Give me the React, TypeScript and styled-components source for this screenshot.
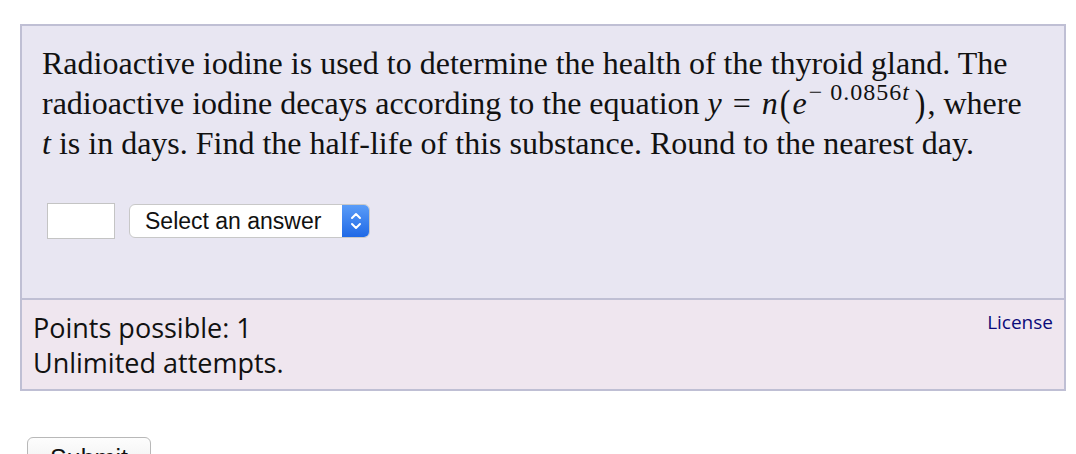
import styled, { createGlobalStyle } from "styled-components";

const GlobalStyle = createGlobalStyle`
    body {
        margin: 0;
        background: #ffffff;
        font-family: "Liberation Sans", Arial, sans-serif;
    }
`;

const Page = styled.div`
    padding: 24px 10px 0 20px;
    width: 1046px;
`;

const QuestionBox = styled.div`
    border: 2px solid #bfbfd4;
    background: #e8e6f2;
`;

const QuestionBody = styled.div`
    padding: 17px 34px 59px 20px;
`;

const Prompt = styled.p`
    margin: 0;
    font-family: "Liberation Serif", "Times New Roman", serif;
    font-size: 32px;
    line-height: 40px;
    color: #111;
`;

const MathVar = styled.span`
    font-style: italic;
`;

const Op = styled.span`
    margin: 0 11px;
`;

const Paren = styled.span`
    display: inline-block;
    transform: scaleY(1.2);
    margin: 0 2px;
`;

const Sup = styled.sup`
    font-size: 24px;
    letter-spacing: 1px;
    vertical-align: 14px;
    line-height: 0;
    margin-left: 2px;
    margin-right: 3px;
`;

const Minus = styled.span`
    margin-right: 7px;
`;

const AnswerRow = styled.div`
    display: flex;
    align-items: center;
    gap: 14px;
    margin-top: 40px;
    padding-left: 5px;
`;

const AnswerInput = styled.input`
    box-sizing: border-box;
    width: 68px;
    height: 36px;
    border: 1px solid #c4c4c4;
    background: #fff;
    outline: none;
`;

const SelectBox = styled.div`
    box-sizing: border-box;
    display: flex;
    align-items: stretch;
    width: 241px;
    height: 34px;
    border: 1px solid #c8c8c8;
    border-radius: 6px;
    background: #fff;
    overflow: hidden;
`;

const SelectLabel = styled.span`
    flex: 1;
    display: flex;
    align-items: center;
    padding-left: 15px;
    font-family: "Liberation Sans", Arial, sans-serif;
    font-size: 23px;
    color: #111;
`;

const SelectArrow = styled.span`
    width: 27px;
    display: flex;
    align-items: center;
    justify-content: center;
    background: linear-gradient(#5a9cf8, #1f69e6);
`;

const Footer = styled.div`
    display: flex;
    justify-content: space-between;
    border-top: 2px solid #bfbfd4;
    background: #efe6ef;
    padding: 10px 11px 9px 11px;
`;

const FooterInfo = styled.div`
    font-family: "Open Sans", sans-serif;
    font-size: 27px;
    line-height: 35px;
    color: #111;
`;

const LicenseLink = styled.a`
    font-family: "Open Sans", sans-serif;
    font-size: 19px;
    line-height: 24px;
    color: #0a0a7a;
    text-decoration: none;
`;

const SubmitButton = styled.button`
    margin: 46px 0 0 7px;
    width: 124px;
    height: 40px;
    border: 1px solid #b8b8b8;
    border-radius: 6px;
    background: linear-gradient(#fdfdfd, #ececec);
    font-family: "Liberation Sans", Arial, sans-serif;
    font-size: 25px;
    color: #111;
    padding: 0;
    line-height: 40px;
`;

const Chevrons = () => (
    <svg width="14" height="22" viewBox="0 0 14 22" fill="none">
        <path d="M3 8 L7 4 L11 8" stroke="#fff" strokeWidth="2" strokeLinecap="round" strokeLinejoin="round" />
        <path d="M3 14 L7 18 L11 14" stroke="#fff" strokeWidth="2" strokeLinecap="round" strokeLinejoin="round" />
    </svg>
);

const App = () => {
    return (
        <>
            <GlobalStyle />
            <Page>
                <QuestionBox>
                    <QuestionBody>
                        <Prompt>
                            Radioactive iodine is used to determine the health of the thyroid gland. The
                            radioactive iodine decays according to the equation <MathVar>y</MathVar>
                            <Op>=</Op>
                            <MathVar>n</MathVar>
                            <Paren>(</Paren>
                            <MathVar>e</MathVar>
                            <Sup>
                                <Minus>−</Minus>0.0856<MathVar>t</MathVar>
                            </Sup>
                            <Paren>)</Paren>, where <MathVar>t</MathVar> is in days. Find the half-life of this
                            substance. Round to the nearest day.
                        </Prompt>
                        <AnswerRow>
                            <AnswerInput type="text" />
                            <SelectBox>
                                <SelectLabel>Select an answer</SelectLabel>
                                <SelectArrow>
                                    <Chevrons />
                                </SelectArrow>
                            </SelectBox>
                        </AnswerRow>
                    </QuestionBody>
                    <Footer>
                        <FooterInfo>
                            Points possible: 1
                            <br />
                            Unlimited attempts.
                        </FooterInfo>
                        <LicenseLink href="#">License</LicenseLink>
                    </Footer>
                </QuestionBox>
                <SubmitButton>Submit</SubmitButton>
            </Page>
        </>
    );
};

export default App;
